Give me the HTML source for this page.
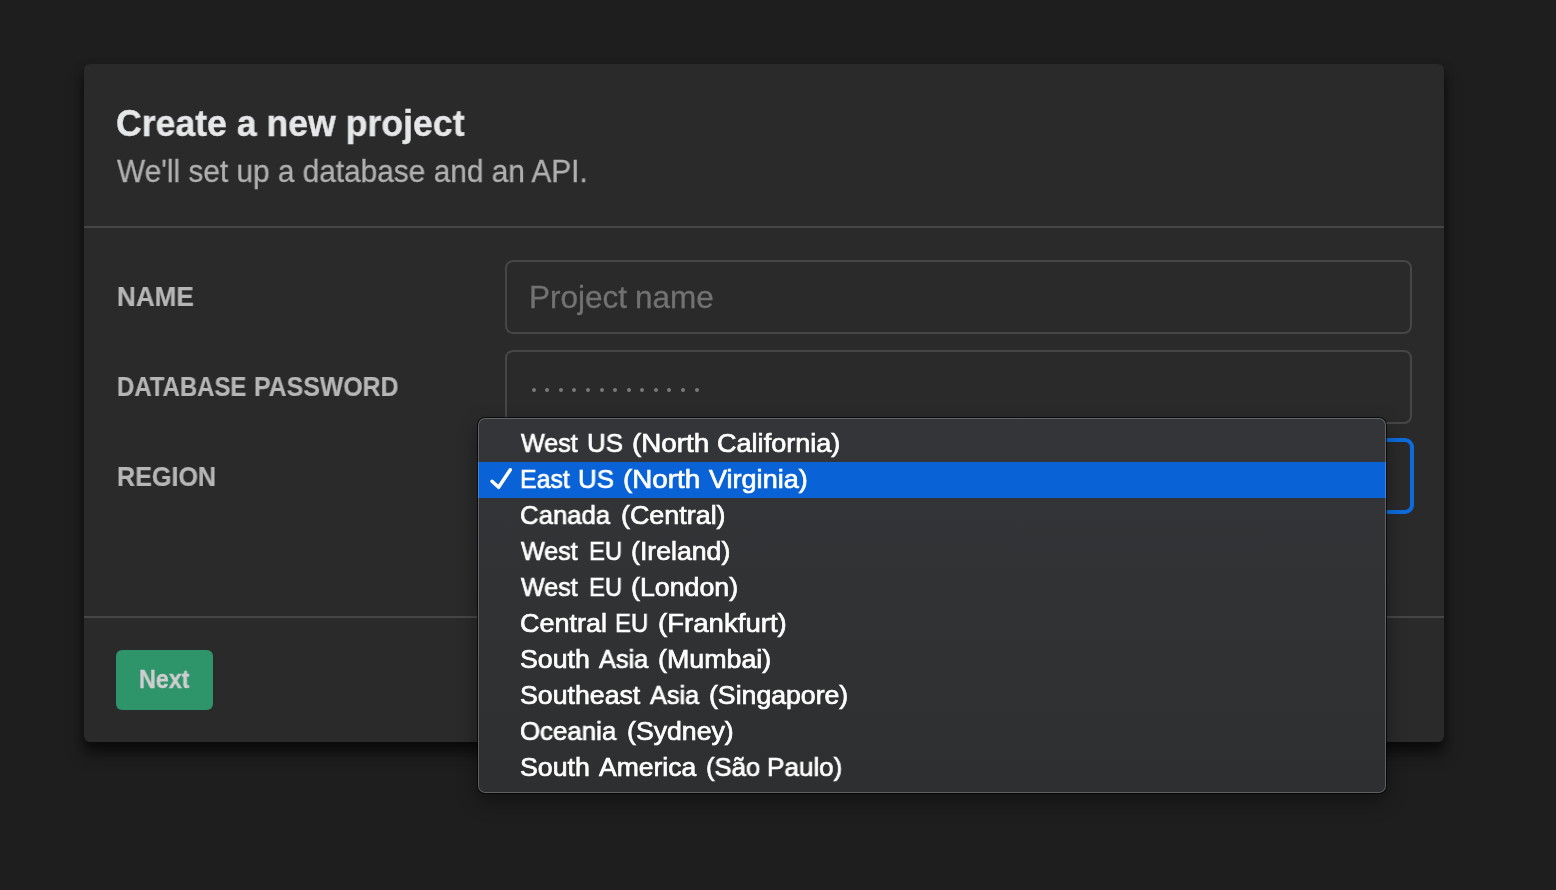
<!DOCTYPE html>
<html lang="en">
<head>
<meta charset="utf-8">
<title>Create a new project</title>
<style>
  html, body { margin: 0; padding: 0; }
  body {
    width: 1556px; height: 890px; overflow: hidden; position: relative;
    background: #1e1e1e;
    font-family: "Liberation Sans", sans-serif;
  }
  .abs { position: absolute; white-space: nowrap; line-height: 1; transform-origin: 0 0; will-change: transform; }
  .card {
    position: absolute; left: 84px; top: 64px; width: 1360px; height: 678px;
    background: #2a2a2a; border-radius: 6px;
    box-shadow: 0 12px 16px rgba(0,0,0,0.5), 0 5px 8px rgba(0,0,0,0.35);
  }
  .hr { position: absolute; left: 84px; width: 1360px; height: 2px; background: #464646; }
  .title { font-weight: bold; color: #e6e7e8; -webkit-text-stroke: 0.35px #e6e7e8; }
  .sub { color: #b0b0b0; -webkit-text-stroke: 0.3px #b0b0b0; }
  .label { font-weight: bold; color: #b6b6b6; -webkit-text-stroke: 0.2px #b6b6b6; }
  .input {
    position: absolute; left: 505px; width: 902.5px; height: 69.5px;
    border: 2px solid #464646; border-radius: 8px; background: #2a2a2a;
  }
  .ph { color: #727272; -webkit-text-stroke: 0.3px #727272; }
  .dot { position: absolute; width: 4px; height: 4px; border-radius: 50%; background: #7a7a7a; top: 387.5px; }
  .focus {
    position: absolute; left: 503px; top: 438px; width: 903px; height: 68px;
    border: 4px solid #0d6bdc; border-radius: 9px; background: #2a2a2a;
  }
  .btn {
    position: absolute; left: 116px; top: 650px; width: 97px; height: 60px;
    background: #2e946a; border-radius: 6px;
  }
  .btntxt { font-weight: bold; color: #d0cdd0; -webkit-text-stroke: 0.35px #d0cdd0; }
  .menu {
    position: absolute; left: 478px; top: 418px; width: 908px; height: 375px;
    border-radius: 7px;
    background: linear-gradient(180deg, #343538 0%, #313234 50%, #2e2f30 100%);
    box-shadow: 0 0 0 1px rgba(0,0,0,0.7), 0 8px 20px rgba(0,0,0,0.38);
    overflow: hidden;
  }
  .menu::after {
    content: ""; position: absolute; left: 0; top: 0; right: 0; bottom: 0;
    border-radius: 7px; box-shadow: inset 0 0 0 1px rgba(255,255,255,0.24);
    pointer-events: none;
  }
  .sel { position: absolute; left: 0; top: 44px; width: 100%; height: 36px; background: #0a63d6; }
  .opt { font-size: 26.5px; color: #ffffff; -webkit-text-stroke: 0.7px #ffffff; }
</style>
</head>
<body>
  <div class="card"></div>
  <div class="hr" style="top:226px"></div>
  <div class="hr" style="top:616px"></div>

  <div class="abs title" id="title" style="left:116.01px;top:106.30px;font-size:36px;transform:scaleX(0.9899)">Create a new project</div>
  <div class="abs sub" id="sub" style="left:117.00px;top:156.00px;font-size:31.5px;transform:scaleX(0.9462)">We'll set up a database and an API.</div>

  <div class="abs label" id="l1" style="left:116.74px;top:283.20px;font-size:27.2px;transform:scaleX(0.9580)">NAME</div>
  <div class="abs label" id="l2" style="left:116.82px;top:373.10px;font-size:27.2px;transform:scaleX(0.8802)">DATABASE</div>
  <div class="abs label" id="l2_1" style="left:254.49px;top:373.10px;font-size:27.2px;transform:scaleX(0.9140)">PASSWORD</div>
  <div class="abs label" id="l3" style="left:116.78px;top:462.80px;font-size:27.2px;transform:scaleX(0.9243)">REGION</div>

  <div class="input" style="top:260px"></div>
  <div class="input" style="top:350px"></div>
  <div class="focus"></div>

  <div class="abs ph" id="ph" style="left:529.41px;top:282.20px;font-size:31.5px;transform:scaleX(0.9970)">Project</div>
  <div class="abs ph" id="ph_1" style="left:634.51px;top:282.20px;font-size:31.5px;transform:scaleX(0.9937)">name</div>
  <div id="dots"><i class="dot" style="left:531.60px"></i><i class="dot" style="left:545.18px"></i><i class="dot" style="left:558.76px"></i><i class="dot" style="left:572.34px"></i><i class="dot" style="left:585.92px"></i><i class="dot" style="left:599.50px"></i><i class="dot" style="left:613.08px"></i><i class="dot" style="left:626.66px"></i><i class="dot" style="left:640.24px"></i><i class="dot" style="left:653.82px"></i><i class="dot" style="left:667.40px"></i><i class="dot" style="left:680.98px"></i><i class="dot" style="left:694.56px"></i></div>

  <div class="btn"></div>
  <div class="abs btntxt" id="next" style="left:138.67px;top:666.80px;font-size:25px;transform:scaleX(0.9320)">Next</div>

  <div class="menu">
    <div class="sel"></div>
    <svg class="abs" style="left:10px;top:47px" width="28" height="28" viewBox="0 0 28 28">
      <path d="M4 16.3 L10.6 22.3 L22.3 4.8" fill="none" stroke="#ffffff" stroke-width="3.5" stroke-linecap="round" stroke-linejoin="round"/>
    </svg>
    <div class="abs opt" id="o1" style="left:43.10px;top:11.50px;font-size:26.5px;transform:scaleX(0.9468)">West</div>
    <div class="abs opt" id="o1_1" style="left:109.25px;top:11.50px;font-size:26.5px;transform:scaleX(0.9755)">US</div>
    <div class="abs opt" id="o1_2" style="left:154.45px;top:11.50px;font-size:26.5px;transform:scaleX(1.0489)">(North</div>
    <div class="abs opt" id="o1_3" style="left:239.08px;top:11.50px;font-size:26.5px;transform:scaleX(1.0215)">California)</div>
    <div class="abs opt" id="o2" style="left:41.83px;top:47.50px;font-size:26.5px;transform:scaleX(0.9368)">East</div>
    <div class="abs opt" id="o2_1" style="left:100.25px;top:47.50px;font-size:26.5px;transform:scaleX(0.9755)">US</div>
    <div class="abs opt" id="o2_2" style="left:145.45px;top:47.50px;font-size:26.5px;transform:scaleX(1.0489)">(North</div>
    <div class="abs opt" id="o2_3" style="left:230.90px;top:47.50px;font-size:26.5px;transform:scaleX(1.0209)">Virginia)</div>
    <div class="abs opt" id="o3" style="left:42.13px;top:83.50px;font-size:26.5px;transform:scaleX(0.9719)">Canada</div>
    <div class="abs opt" id="o3_1" style="left:142.79px;top:83.50px;font-size:26.5px;transform:scaleX(1.0143)">(Central)</div>
    <div class="abs opt" id="o4" style="left:43.10px;top:119.50px;font-size:26.5px;transform:scaleX(0.9468)">West</div>
    <div class="abs opt" id="o4_1" style="left:110.60px;top:119.50px;font-size:26.5px;transform:scaleX(0.8998)">EU</div>
    <div class="abs opt" id="o4_2" style="left:152.99px;top:119.50px;font-size:26.5px;transform:scaleX(1.0067)">(Ireland)</div>
    <div class="abs opt" id="o5" style="left:43.10px;top:155.50px;font-size:26.5px;transform:scaleX(0.9468)">West</div>
    <div class="abs opt" id="o5_1" style="left:110.60px;top:155.50px;font-size:26.5px;transform:scaleX(0.8998)">EU</div>
    <div class="abs opt" id="o5_2" style="left:152.99px;top:155.50px;font-size:26.5px;transform:scaleX(1.0100)">(London)</div>
    <div class="abs opt" id="o6" style="left:42.08px;top:191.50px;font-size:26.5px;transform:scaleX(1.0175)">Central</div>
    <div class="abs opt" id="o6_1" style="left:137.49px;top:191.50px;font-size:26.5px;transform:scaleX(0.9027)">EU</div>
    <div class="abs opt" id="o6_2" style="left:179.96px;top:191.50px;font-size:26.5px;transform:scaleX(1.0414)">(Frankfurt)</div>
    <div class="abs opt" id="o7" style="left:42.09px;top:227.50px;font-size:26.5px;transform:scaleX(1.0087)">South</div>
    <div class="abs opt" id="o7_1" style="left:120.70px;top:227.50px;font-size:26.5px;transform:scaleX(0.9554)">Asia</div>
    <div class="abs opt" id="o7_2" style="left:179.99px;top:227.50px;font-size:26.5px;transform:scaleX(1.0120)">(Mumbai)</div>
    <div class="abs opt" id="o8" style="left:42.09px;top:263.50px;font-size:26.5px;transform:scaleX(1.0077)">Southeast</div>
    <div class="abs opt" id="o8_1" style="left:172.00px;top:263.50px;font-size:26.5px;transform:scaleX(0.9534)">Asia</div>
    <div class="abs opt" id="o8_2" style="left:231.19px;top:263.50px;font-size:26.5px;transform:scaleX(1.0056)">(Singapore)</div>
    <div class="abs opt" id="o9" style="left:42.12px;top:299.50px;font-size:26.5px;transform:scaleX(0.9759)">Oceania</div>
    <div class="abs opt" id="o9_1" style="left:148.89px;top:299.50px;font-size:26.5px;transform:scaleX(1.0066)">(Sydney)</div>
    <div class="abs opt" id="o10" style="left:42.09px;top:335.50px;font-size:26.5px;transform:scaleX(1.0087)">South</div>
    <div class="abs opt" id="o10_1" style="left:120.70px;top:335.50px;font-size:26.5px;transform:scaleX(0.9995)">America</div>
    <div class="abs opt" id="o10_2" style="left:227.63px;top:335.50px;font-size:26.5px;transform:scaleX(0.9680)">(São</div>
    <div class="abs opt" id="o10_3" style="left:289.23px;top:335.50px;font-size:26.5px;transform:scaleX(0.9827)">Paulo)</div>
  </div>
</body>
</html>
